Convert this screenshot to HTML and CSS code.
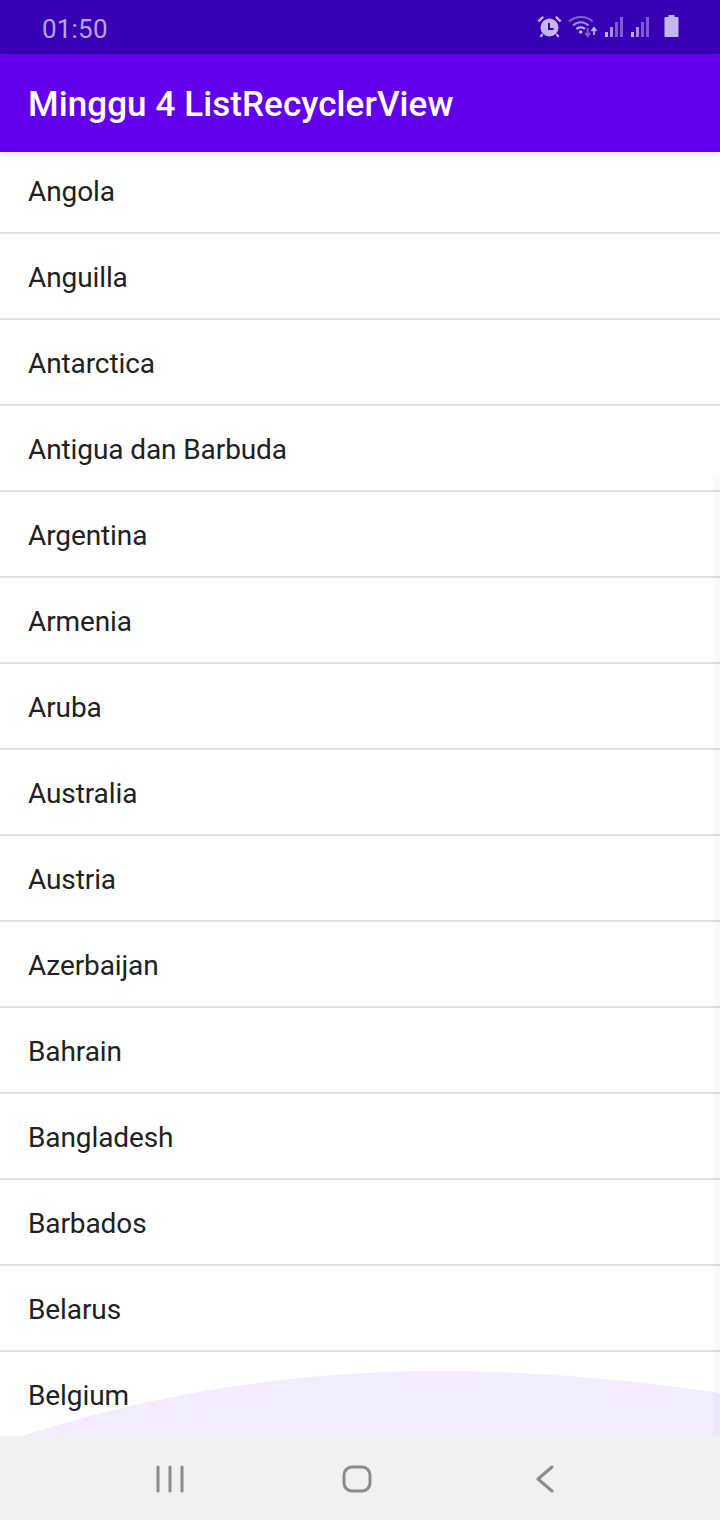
FILE: index.html
```html
<!DOCTYPE html>
<html>
<head>
    <title>Minggu 4 ListRecyclerView</title>
    <link rel="stylesheet" href="styles.css">
</head>
<body>
    <div class="phone">
        <div class="status-bar">
            <span class="clock">01:50</span>
            <div class="status-icons">
                <svg class="alarm" width="26" height="24" viewBox="0 0 26 24">
                    <circle cx="13.500" cy="12.500" r="9" fill="currentColor"/>
                    <path d="M13 8v6h4.500" fill="none" stroke="#3700b3" stroke-width="2"/>
                    <path d="M1.500 5.500 6.500 1 8 2.800 3.200 7.200zM25.500 5.500 20.500 1 19 2.800 23.800 7.200z" fill="currentColor"/>
                    <path d="M6.500 19 4.500 22M20.500 19 22.500 22" stroke="currentColor" stroke-width="2.200"/>
                </svg>
                <svg class="wifi" width="30" height="24" viewBox="0 0 30 24">
                    <path d="M1 6.500C7.500 .5 18.500 .5 24.500 6.500" fill="none" stroke="currentColor" stroke-width="2" opacity=".55"/>
                    <path d="M5 10.500C9.500 6 16 6 20.500 10.500" fill="none" stroke="currentColor" stroke-width="2" opacity=".75"/>
                    <path d="M8.500 14C11 11.500 14.500 11.500 17 14" fill="none" stroke="currentColor" stroke-width="2"/>
                    <circle cx="12.700" cy="17" r="1.800" fill="currentColor"/>
                    <path d="M19.700 13v8M17.200 18l2.500 3 2.500-3" fill="none" stroke="currentColor" stroke-width="1.800" opacity=".55"/>
                    <path d="M26 20v-7M23.500 16l2.500-3 2.500 3" fill="none" stroke="currentColor" stroke-width="1.800"/>
                </svg>
                <svg class="signal" width="20" height="24" viewBox="0 0 20 24">
                    <rect x="1" y="17" width="3" height="5" fill="currentColor"/>
                    <rect x="6" y="12" width="3" height="10" fill="currentColor" opacity=".8"/>
                    <rect x="11" y="7" width="3" height="15" fill="currentColor" opacity=".5"/>
                    <rect x="16" y="2" width="3" height="20" fill="currentColor" opacity=".5"/>
                </svg>
                <svg class="signal" width="20" height="24" viewBox="0 0 20 24">
                    <rect x="1" y="17" width="3" height="5" fill="currentColor"/>
                    <rect x="6" y="12" width="3" height="10" fill="currentColor" opacity=".8"/>
                    <rect x="11" y="7" width="3" height="15" fill="currentColor" opacity=".5"/>
                    <rect x="16" y="2" width="3" height="20" fill="currentColor" opacity=".5"/>
                </svg>
                <svg class="battery" width="15" height="24" viewBox="0 0 15 24">
                    <path d="M4.500 0h6v2h3a1 1 0 0 1 1 1v18a1 1 0 0 1-1 1h-12a1 1 0 0 1-1-1V3a1 1 0 0 1 1-1h3z" fill="currentColor"/>
                </svg>
            </div>
        </div>
        <header class="app-bar">
            <h1>Minggu 4 ListRecyclerView</h1>
        </header>
        <div class="content">
            <ul class="country-list">
                <li>Angola</li>
                <li>Anguilla</li>
                <li>Antarctica</li>
                <li>Antigua dan Barbuda</li>
                <li>Argentina</li>
                <li>Armenia</li>
                <li>Aruba</li>
                <li>Australia</li>
                <li>Austria</li>
                <li>Azerbaijan</li>
                <li>Bahrain</li>
                <li>Bangladesh</li>
                <li>Barbados</li>
                <li>Belarus</li>
                <li>Belgium</li>
            </ul>
            <div class="scrollbar"></div>
            <svg class="glow" width="720" height="65" viewBox="0 0 720 65">
                <path d="M22 65C140 26 285 0 440 0C540 0 640 10 720 22V65Z"/>
            </svg>
        </div>
        <nav class="nav-bar">
            <svg width="28" height="28" viewBox="0 0 28 28">
                <path d="M2 2v24M14 2v24M26 2v24" fill="none" stroke="#8b8b8b" stroke-width="3" stroke-linecap="round"/>
            </svg>
            <svg width="30" height="28" viewBox="0 0 30 28">
                <rect x="2" y="2" width="26" height="24" rx="8" fill="none" stroke="#8b8b8b" stroke-width="3"/>
            </svg>
            <svg width="20" height="28" viewBox="0 0 20 28">
                <path d="M17 2 3 14l14 12" fill="none" stroke="#8b8b8b" stroke-width="3" stroke-linecap="round" stroke-linejoin="round"/>
            </svg>
        </nav>
    </div>
</body>
</html>
```

FILE: styles.css
```css
html, body {
    margin: 0;
    padding: 0;
}

body {
    font-family: Roboto, Arial, sans-serif;
    background-color: #fff;
}

.phone {
    display: flex;
    flex-direction: column;
    width: 720px;
    height: 1520px;
    overflow: hidden;
}

.status-bar {
    display: flex;
    align-items: center;
    justify-content: space-between;
    flex: none;
    height: 54px;
    padding: 0 41px 0 42px;
    box-sizing: border-box;
    background-color: #3700b3;
    color: #c5b6ee;
}

.clock {
    padding-top: 3px;
    font-size: 26px;
    letter-spacing: 0.2px;
    color: #b9a3ea;
}

.status-icons {
    display: flex;
    align-items: center;
    gap: 6px;
}

.status-icons .battery {
    margin-left: 8px;
}

.app-bar {
    position: relative;
    z-index: 1;
    display: flex;
    align-items: center;
    flex: none;
    height: 98px;
    padding: 2px 0 0 28px;
    box-sizing: border-box;
    background-color: #6200ee;
    box-shadow: 0 2px 8px rgba(0, 0, 0, 0.14);
}

.app-bar h1 {
    margin: 0;
    font-size: 35px;
    font-weight: 500;
    letter-spacing: 0.08px;
    color: #fff;
}

.content {
    position: relative;
    flex: 1;
    overflow: hidden;
}

.country-list {
    list-style-type: none;
    margin: -4px 0 0;
    padding: 0;
}

.country-list li {
    display: flex;
    align-items: center;
    height: 86px;
    padding: 3px 0 0 28px;
    box-sizing: border-box;
    border-bottom: 2px solid #e0e0e0;
    font-size: 28px;
    letter-spacing: -0.1px;
    color: #212121;
}

.scrollbar {
    position: absolute;
    top: 324px;
    right: 0;
    bottom: 0;
    width: 7px;
    background-color: rgba(0, 0, 0, 0.02);
}

.glow {
    position: absolute;
    left: 0;
    bottom: 0;
    display: block;
}

.glow path {
    fill: #6200ee;
    fill-opacity: 0.08;
}

.nav-bar {
    display: flex;
    align-items: center;
    flex: none;
    height: 84px;
    padding-top: 2px;
    box-sizing: border-box;
    background-color: #f1f1f1;
}

.nav-bar svg:nth-child(1) {
    margin-left: 156px;
}

.nav-bar svg:nth-child(2) {
    margin-left: 157.5px;
}

.nav-bar svg:nth-child(3) {
    margin-left: 163px;
}
```
